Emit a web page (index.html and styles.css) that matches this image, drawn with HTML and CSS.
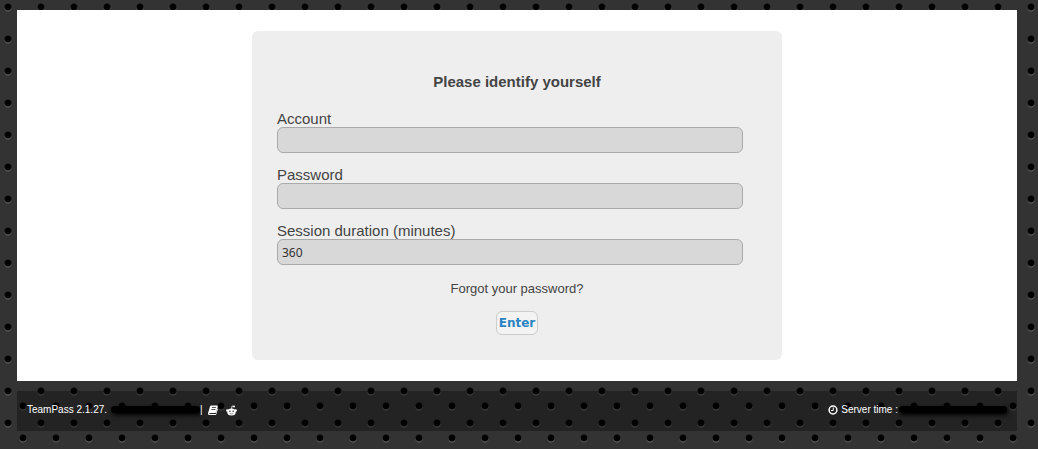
FILE: index.html
```html
<!DOCTYPE html>
<html lang="en">
<head>
<meta charset="utf-8">
<title>TeamPass</title>
<link rel="stylesheet" href="styles.css">
</head>
<body>
<main class="main">
  <form class="login">
    <h1 class="title">Please identify yourself</h1>
    <div class="field">
      <label for="account">Account</label>
      <input id="account" type="text">
    </div>
    <div class="field">
      <label for="password">Password</label>
      <input id="password" type="password">
    </div>
    <div class="field">
      <label for="duration">Session duration (minutes)</label>
      <input id="duration" type="text" value="360">
    </div>
    <a class="forgot" href="#">Forgot your password?</a>
    <button class="enter" type="button">Enter</button>
  </form>
</main>
<footer class="footer">
  <div class="group">
    <span>TeamPass 2.1.27.</span><span class="bar bar-version"></span><span class="divider">|</span>
    <a class="icon book" href="#" aria-label="Documentation">
      <svg width="10" height="10" viewBox="0 0 20 20"><path fill="#fff" fill-rule="evenodd" d="M6.500 1h12q1.500 0 1 1.800L16 14.500Q15.500 16 14 16H4q-1.500 0-1.500 1t1.500 1h11.500L18.500 7q1.500 0 1 2L17 17.500Q16.300 20 14 20H3Q-.5 20 0 16.500L4 3Q4.600 1 6.500 1zM8 4.500 7.600 6h8l.4-1.500zM7 8.200l-.4 1.500h8l.4-1.500z"/></svg>
    </a>
    <a class="icon reddit" href="#" aria-label="Reddit">
      <svg width="11" height="11" viewBox="0 0 22 22"><g fill="#fff"><ellipse cx="11" cy="14" rx="8.500" ry="7"/><circle cx="2.800" cy="11" r="2.600"/><circle cx="19.200" cy="11" r="2.600"/><circle cx="16" cy="3" r="2"/></g><path d="M11 8l1-6 4 1" fill="none" stroke="#fff" stroke-width="1.600"/><circle cx="7.800" cy="12.500" r="1.500" fill="#222"/><circle cx="14.200" cy="12.500" r="1.500" fill="#222"/><path d="M7.500 17q3.500 2 7 0" fill="none" stroke="#222"/></svg>
    </a>
  </div>
  <div class="group">
    <svg class="clock" width="10" height="10" viewBox="0 0 20 20" fill="none" stroke="#fff"><circle cx="10" cy="10" r="7.800" stroke-width="3"/><path d="M10.500 5v6H6" stroke-width="2"/></svg>
    <span>Server time :</span><span class="bar bar-time"></span>
  </div>
</footer>
</body>
</html>
```
FILE: styles.css
```css
* { box-sizing: border-box; }

body {
  margin: 0;
  min-height: 100vh;
  padding: 10px 21px 18px 17px;
  font-family: "Liberation Sans", Arial, sans-serif;
  color: #444;
  background-color: #333;
  background-image:
    radial-gradient(circle at 8px 7px, #000 0 2px, #050505 3px, transparent 4px),
    radial-gradient(circle at 8px 8px, #777 0 2px, #666 3px, transparent 4px),
    radial-gradient(circle at 23px 22px, #000 0 2px, #050505 3px, transparent 4px),
    radial-gradient(circle at 23px 23px, #777 0 2px, #666 3px, transparent 4px);
  background-size: 33px 32px;
}

.main {
  padding: 21px 16px;
  background: #fff;
}

.login {
  display: flex;
  flex-direction: column;
  max-width: 530px;
  margin: 0 auto;
  padding: 42px 39px 25px 25px;
  border-radius: 6px;
  background: #eee;
}

.title {
  margin: 0 -14px 20px 0;
  font-size: 15px;
  line-height: 18px;
  text-align: center;
}

.field {
  display: flex;
  flex-direction: column;
  margin-bottom: 14px;
  font-size: 15px;
  line-height: 16px;
}

.field input {
  width: 100%;
  height: 26px;
  padding: 0 4px;
  border: 1px solid #aaa;
  border-radius: 6px;
  background: #d8d8d8;
  color: #333;
  font-family: "Noto Sans", sans-serif;
  font-size: 12px;
}

.forgot {
  align-self: center;
  margin: 1px -14px 14px 0;
  color: #444;
  font-size: 13px;
  line-height: 17px;
  text-decoration: none;
}

.enter {
  align-self: center;
  height: 24px;
  margin-right: -14px;
  padding: 0 2px;
  border: 1px solid #ccc;
  border-radius: 6px;
  background: #f3f3f3;
  color: #2b83c2;
  font-family: "DejaVu Sans", sans-serif;
  font-size: 12px;
  font-weight: bold;
}

.footer {
  display: flex;
  justify-content: space-between;
  align-items: center;
  height: 40px;
  margin-top: 10px;
  padding: 0 10px;
  background: rgba(0, 0, 0, 0.3);
  color: #fff;
  font-size: 10px;
  line-height: 12px;
}

.group {
  display: flex;
  align-items: center;
  padding-bottom: 2px;
}

.bar {
  height: 7px;
  margin-bottom: 2px;
  border-radius: 4px;
  background: #000;
  box-shadow: 1px 2px 4px #000;
}

.bar-version {
  width: 89px;
  margin-left: 4px;
}

.bar-time {
  width: 108px;
  margin-left: 1px;
}

.icon { display: flex; }
.book { margin-left: 5px; }
.reddit { margin-left: 8px; }
.clock { margin-right: 3px; }
```
